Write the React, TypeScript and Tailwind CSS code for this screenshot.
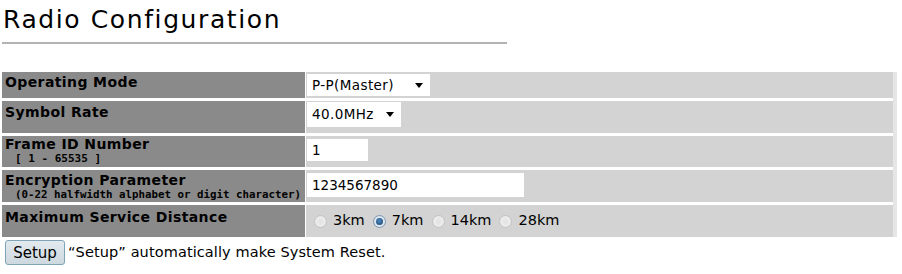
import React from "react";

function Radio({ checked }: { checked?: boolean }) {
  return (
    <span
      className={
        "inline-flex shrink-0 items-center justify-center w-[13px] h-[13px] rounded-full border " +
        (checked
          ? "border-[#7f9ab3] bg-[radial-gradient(circle,#eef4f8_0%,#cfdbe5_100%)]"
          : "border-[#c4c4c4] bg-[radial-gradient(circle,#e2e2e2_0%,#ececec_60%,#d8d8d8_100%)]")
      }
    >
      {checked && <span className="w-[7px] h-[7px] rounded-full bg-[radial-gradient(circle_at_45%_40%,#4f8ac0_0%,#173f6b_100%)]" />}
    </span>
  );
}

function Select({ label, w, h }: { label: string; w: string; h: string }) {
  return (
    <div className={"flex items-center justify-between bg-white pl-[5px] pr-[7px] " + w + " " + h}>
      <span className="tracking-[0.4px]">{label}</span>
      <span className="w-0 h-0 border-l-[4px] border-r-[4px] border-t-[5px] border-l-transparent border-r-transparent border-t-black" />
    </div>
  );
}

export default function App() {
  const sans = { fontFamily: '"DejaVu Sans", "Liberation Sans", sans-serif' };
  const mono = { fontFamily: '"DejaVu Sans Mono", "Liberation Mono", monospace' };
  const labelCls =
    "w-[303px] shrink-0 bg-[#8a8a8a] pl-[3px] text-[14px] font-bold leading-[16px] tracking-[0.4px] text-black whitespace-nowrap overflow-hidden";
  const valueCls = "flex-1 bg-[#d3d3d3] flex pl-[1px] text-[13.5px] text-black";
  return (
    <div className="w-[902px] h-[274px] bg-white" style={sans}>
      <div className="pl-[3px] pt-[5px] text-[25px] leading-[30px] text-black tracking-[1.6px]">Radio Configuration</div>
      <div className="ml-[2px] mt-[7px] w-[505px] h-[2px] bg-[#b3b3b3]" />
      <div className="ml-[2px] mt-[28px] w-[895px] flex flex-col gap-[3px] border-r-[4px] border-[#e6e6e6]">
        <div className="flex h-[26px] gap-[1px]">
          <div className={labelCls + " pt-[2px]"}>Operating Mode</div>
          <div className={valueCls + " items-center"}>
            <Select label="P-P(Master)" w="w-[123px]" h="h-[22px]" />
          </div>
        </div>
        <div className="flex h-[32px] gap-[1px]">
          <div className={labelCls + " pt-[3px]"}>Symbol Rate</div>
          <div className={valueCls + " items-start pt-[1px]"}>
            <Select label="40.0MHz" w="w-[94px]" h="h-[25px]" />
          </div>
        </div>
        <div className="flex h-[31px] gap-[1px]">
          <div className={labelCls}>
            <div className="leading-[17px]">Frame ID Number</div>
            <div className="pl-[10px] text-[11px] leading-[12px] tracking-normal" style={mono}>[ 1 - 65535 ]</div>
          </div>
          <div className={valueCls + " items-start pt-[3px]"}>
            <div className="bg-white w-[61px] h-[22px] pl-[5px] flex items-center">1</div>
          </div>
        </div>
        <div className="flex h-[32px] gap-[1px]">
          <div className={labelCls + " pt-[2px]"}>
            <div className="leading-[17px]">Encryption Parameter</div>
            <div className="pl-[10px] text-[10.8px] leading-[12px] tracking-normal" style={mono}>(0-22 halfwidth alphabet or digit character)</div>
          </div>
          <div className={valueCls + " items-start pt-[3px]"}>
            <div className="bg-white w-[217px] h-[24px] pl-[5px] flex items-center">1234567890</div>
          </div>
        </div>
        <div className="flex h-[32px] gap-[1px]">
          <div className={labelCls + " pt-[4px]"}>Maximum Service Distance</div>
          <div className={valueCls + " items-center pl-[8px] text-[14.5px]"}>
            <div className="flex items-center">
              <Radio />
              <span className="ml-[6px] mr-[8px]">3km</span>
              <Radio checked />
              <span className="ml-[6px] mr-[8px]">7km</span>
              <Radio />
              <span className="ml-[6px] mr-[8px]">14km</span>
              <Radio />
              <span className="ml-[6px]">28km</span>
            </div>
          </div>
        </div>
      </div>
      <div className="flex items-center mt-[3px] ml-[5px] gap-[3px] text-[14.5px] text-black">
        <button className="w-[60px] h-[25px] rounded-[3px] border border-[#7fa3b8] bg-[linear-gradient(#e3eaee,#cdd8df)] text-[15px] leading-[18px]">
          Setup
        </button>
        <span className="tracking-[0.1px]">“Setup” automatically make System Reset.</span>
      </div>
    </div>
  );
}
